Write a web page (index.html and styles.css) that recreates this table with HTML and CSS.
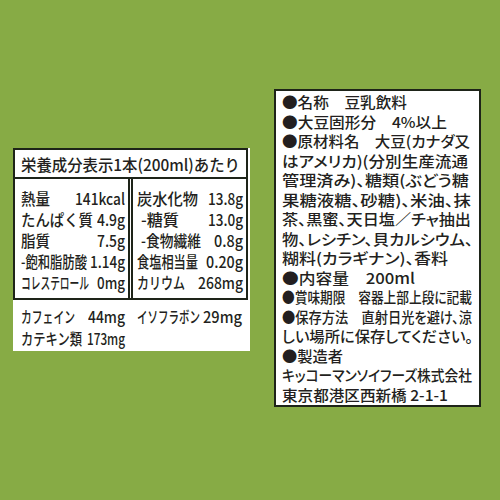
FILE: index.html
```html
<!DOCTYPE html>
<html lang="ja">
<head>
<meta charset="utf-8">
<link rel="stylesheet" href="styles.css">
</head>
<body>
<div class="page">
  <section class="nutri">
    <div class="table">
      <div class="head"><span class="fit" data-w="219"><span>栄養成分表示1本(200ml)あたり</span></span></div>
      <div class="cols">
        <div class="col col-l">
          <div class="row"><span class="fit" data-w="29"><span>熱量</span></span><span class="fit" data-w="50"><span>141kcal</span></span></div>
          <div class="row"><span class="fit" data-w="72"><span>たんぱく質</span></span><span class="fit" data-w="28"><span>4.9g</span></span></div>
          <div class="row"><span class="fit" data-w="29"><span>脂質</span></span><span class="fit" data-w="28"><span>7.5g</span></span></div>
          <div class="row"><span class="fit" data-w="66"><span>-飽和脂肪酸</span></span><span class="fit" data-w="35"><span>1.14g</span></span></div>
          <div class="row"><span class="fit" data-w="68"><span>コレステロール</span></span><span class="fit" data-w="28"><span>0mg</span></span></div>
        </div>
        <div class="col col-r">
          <div class="row"><span class="fit" data-w="61"><span>炭水化物</span></span><span class="fit" data-w="35"><span>13.8g</span></span></div>
          <div class="row"><span class="fit ind" data-w="38"><span>-糖質</span></span><span class="fit" data-w="35"><span>13.0g</span></span></div>
          <div class="row"><span class="fit ind" data-w="60"><span>-食物繊維</span></span><span class="fit" data-w="29"><span>0.8g</span></span></div>
          <div class="row"><span class="fit" data-w="61"><span>食塩相当量</span></span><span class="fit" data-w="37"><span>0.20g</span></span></div>
          <div class="row"><span class="fit" data-w="48"><span>カリウム</span></span><span class="fit" data-w="45"><span>268mg</span></span></div>
        </div>
      </div>
    </div>
    <div class="extra">
      <div class="row"><span class="fit" data-w="54"><span>カフェイン</span></span><span class="fit" data-w="37"><span>44mg</span></span></div>
      <div class="row"><span class="fit" data-w="63"><span>イソフラボン</span></span><span class="fit" data-w="39"><span>29mg</span></span></div>
      <div class="row"><span class="fit" data-w="61"><span>カテキン類</span></span><span class="fit" data-w="38"><span>173mg</span></span></div>
    </div>
  </section>
  <section class="info">
    <div class="ln"><span class="fit" data-w="125"><span>●名称　豆乳飲料</span></span></div>
    <div class="ln"><span class="fit" data-w="165"><span>●大豆固形分　4%以上</span></span></div>
    <div class="ln"><span class="fit" data-w="188"><span>●原材料名　大豆(カナダ又</span></span></div>
    <div class="ln"><span class="fit" data-w="186"><span>はアメリカ)(分別生産流通</span></span></div>
    <div class="ln"><span class="fit" data-w="187"><span>管理済み)、糖類(ぶどう糖</span></span></div>
    <div class="ln"><span class="fit" data-w="189"><span>果糖液糖、砂糖)、米油、抹</span></span></div>
    <div class="ln"><span class="fit" data-w="189"><span>茶、黒蜜、天日塩／チャ抽出</span></span></div>
    <div class="ln"><span class="fit" data-w="191"><span>物、レシチン、貝カルシウム、</span></span></div>
    <div class="ln"><span class="fit" data-w="166"><span>糊料(カラギナン)、香料</span></span></div>
    <div class="ln"><span class="fit" data-w="133"><span>●内容量　200ml</span></span></div>
    <div class="ln"><span class="fit" data-w="190"><span>●賞味期限　容器上部上段に記載</span></span></div>
    <div class="ln"><span class="fit" data-w="190"><span>●保存方法　直射日光を避け、涼</span></span></div>
    <div class="ln"><span class="fit" data-w="191"><span>しい場所に保存してください。</span></span></div>
    <div class="ln"><span class="fit" data-w="61"><span>●製造者</span></span></div>
    <div class="ln"><span class="fit" data-w="190"><span>キッコーマンソイフーズ株式会社</span></span></div>
    <div class="ln"><span class="fit" data-w="166"><span>東京都港区西新橋 2-1-1</span></span></div>
  </section>
</div>
<script src="fit.js"></script>
</body>
</html>
```
FILE: styles.css
```css
html, body {
  margin: 0;
  padding: 0;
}
body {
  width: 500px;
  height: 500px;
  background: #87ab45;
  color: #231f20;
  font-family: "Noto Sans CJK JP", "Noto Sans", sans-serif;
  font-weight: 500;
  overflow: hidden;
}
.page {
  display: flex;
  align-items: flex-start;
  padding-left: 13px;
}
.fit {
  display: inline-block;
  white-space: nowrap;
  overflow: visible;
}
.fit > span {
  display: inline-block;
  transform-origin: left center;
}
.nutri {
  margin-top: 148px;
  width: 237px;
  background: #fff;
  font-size: 16px;
}
.table {
  border: 2px solid #1e2419;
  width: 235px;
  box-sizing: border-box;
}
.head {
  height: 27px;
  line-height: 28px;
  padding-left: 6px;
  border-bottom: 2px solid #1e2419;
  white-space: nowrap;
}
.cols {
  display: grid;
  grid-template-columns: 115px 1fr;
  column-gap: 1px;
}
.col {
  padding-top: 8px;
  padding-bottom: 6px;
}
.col-l {
  border-right: 2px solid #1e2419;
  padding-left: 6px;
  padding-right: 3px;
}
.col-r {
  border-left: 2px solid #1e2419;
  padding-left: 4px;
  padding-right: 3px;
}
.row {
  display: flex;
  justify-content: space-between;
  align-items: center;
  height: 21px;
  white-space: nowrap;
}
.ind {
  margin-left: 4px;
}
.extra {
  display: grid;
  grid-template-columns: 104px 105px;
  column-gap: 12px;
  padding: 4.5px 8px 2.5px 8px;
}
.extra .row {
  height: 22px;
}
.info {
  margin-left: 24px;
  margin-top: 89px;
  width: 207px;
  box-sizing: border-box;
  border: 2px solid #1e2419;
  background: #fff;
  padding: 1px 0 1px 6px;
  font-size: 15px;
  line-height: 19.5px;
  font-feature-settings: "palt";
}
.ln {
  height: 19.5px;
  white-space: nowrap;
}
```
FILE: fit.js
```js
function fitAll() {
  document.querySelectorAll('.fit').forEach(function (el) {
    var inner = el.firstElementChild;
    var w = parseFloat(el.getAttribute('data-w'));
    inner.style.transform = 'none';
    var nat = inner.getBoundingClientRect().width;
    el.style.width = w + 'px';
    if (nat > 0) {
      inner.style.transform = 'scaleX(' + (w / nat) + ')';
    }
  });
}
fitAll();
if (document.fonts && document.fonts.ready) {
  document.fonts.ready.then(fitAll);
}
```
